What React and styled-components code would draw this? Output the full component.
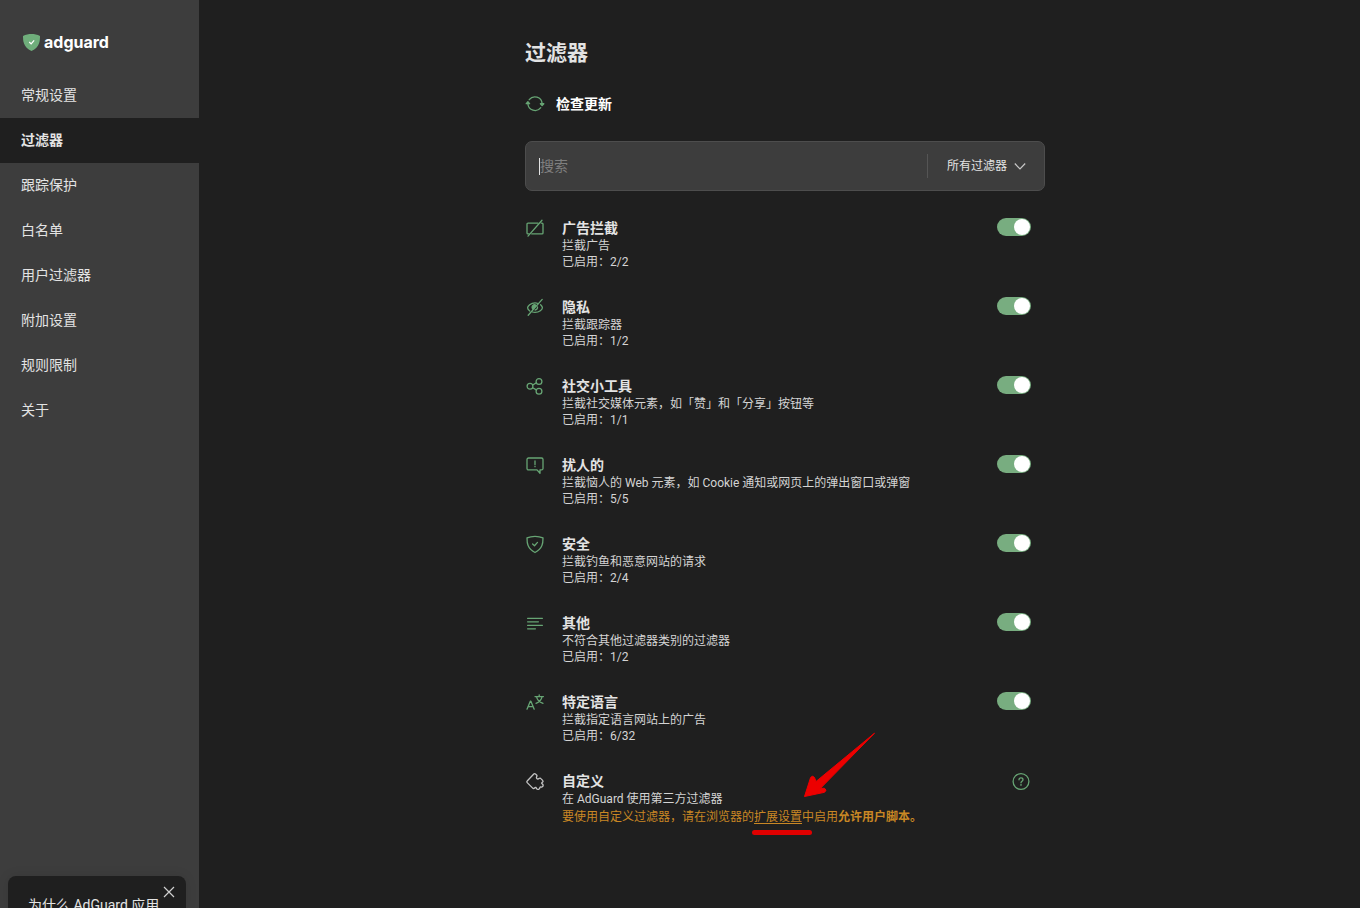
import { useState } from 'react'
import styled, { createGlobalStyle } from 'styled-components'

const NAV_ITEMS = [
    '常规设置',
    '过滤器',
    '跟踪保护',
    '白名单',
    '用户过滤器',
    '附加设置',
    '规则限制',
    '关于',
]

const FILTER_GROUPS = [
    { id: 'ads', title: '广告拦截', description: '拦截广告', enabled: '2/2' },
    { id: 'privacy', title: '隐私', description: '拦截跟踪器', enabled: '1/2' },
    {
        id: 'social',
        title: '社交小工具',
        description: '拦截社交媒体元素，如「赞」和「分享」按钮等',
        enabled: '1/1',
    },
    {
        id: 'annoyances',
        title: '扰人的',
        description: '拦截恼人的 Web 元素，如 Cookie 通知或网页上的弹出窗口或弹窗',
        enabled: '5/5',
    },
    {
        id: 'security',
        title: '安全',
        description: '拦截钓鱼和恶意网站的请求',
        enabled: '2/4',
    },
    {
        id: 'other',
        title: '其他',
        description: '不符合其他过滤器类别的过滤器',
        enabled: '1/2',
    },
    {
        id: 'language',
        title: '特定语言',
        description: '拦截指定语言网站上的广告',
        enabled: '6/32',
    },
]

const ICONS = {
    ads: (
        <>
            <path d='M4.2 15.9H3a1 1 0 0 1-1-1V6.1a1 1 0 0 1 1-1h10' />
            <path d='M16.2 5.1H17a1 1 0 0 1 1 1v8.8a1 1 0 0 1-1 1H6.8' />
            <path d='M17 2.3 3 18.1' />
        </>
    ),
    privacy: (
        <>
            <path d='M4.8 14C3.300 12.900 2.600 11.600 2.600 10.800c0-1.600 3-5 7.400-5 1.200 0 2.200.3 3.200.7' />
            <path d='M15.600 7.700c1.200 1.100 1.800 2.300 1.800 3.100 0 1.600-3 4.600-7.400 4.600-.9 0-1.700-.1-2.500-.4' />
            <path d='M8 12.200a2.400 2.400 0 0 1 3.200-3.800L8 12.200Z' fill='#67a574' />
            <path d='M12.500 10a2.600 2.600 0 0 1-2.400 3' />
            <path d='M17.200 2.400 3.200 18.200' />
        </>
    ),
    social: (
        <>
            <circle cx='5' cy='10.300' r='2.900' />
            <circle cx='14' cy='5.500' r='2.900' />
            <circle cx='14' cy='15.300' r='2.900' />
            <path d='M7.700 9 11.300 6.900M7.700 11.700l3.600 2.200' />
        </>
    ),
    annoyances: (
        <>
            <path d='M12 14.900H3.500A1.500 1.500 0 0 1 2 13.400V4.500A1.500 1.500 0 0 1 3.500 3h13A1.500 1.500 0 0 1 18 4.500v8.900a1.500 1.500 0 0 1-1.500 1.500H15v3.400L12 14.900Z' />
            <path d='M10 6v3.400M10 11.200v.5' />
        </>
    ),
    security: (
        <>
            <path d='M10 2.300c2.800 0 5.600.5 8 1.600 0 5-.2 10.600-8 14.600-7.800-4-8-9.600-8-14.600 2.400-1.100 5.200-1.600 8-1.600Z' />
            <path d='m7.600 10 1.900 1.700 3-3.300' />
        </>
    ),
    other: <path d='M2.600 5.300h14.800M2.600 8.800h10.800M2.600 12.300h14.800M2.600 15.800h7.800' />,
    language: (
        <>
            <path d='m2 17.200 3.300-8h.6l3.300 8M3.100 14.600h5' />
            <path d='M10 4.600h8.400M14.200 3v1.600M17 4.800c-.6 3-2.800 5.300-6 6.500M11.600 4.800c.6 3 2.800 5.300 6.400 6.500' />
        </>
    ),
    custom: (
        <path d='M2.200 10 8.800 3a1.200 1.200 0 0 1 1.700 0l1.300 1.200c.4.5.3 1-.1 1.500-.7 1.100 0 2.200 1 2.300.5 0 .9-.1 1.300-.5.700-.6 1.400-.5 1.900.1l1.700 1.800c.6.600.6 1.200 0 1.700l-.7.6c-.4.400-.2.900.3 1.100 1.300.6 1.300 2.600-.1 3.100-.4.200-.9.200-1.400.1-.5-.1-.8.2-.9.700 0 .6-.2 1-.7 1.300-1.100.8-2.600.2-2.900-1-.2-.6-.6-.8-1.100-.4l-.7.600a1.200 1.200 0 0 1-1.700-.1L2.200 11.600a1.100 1.100 0 0 1 0-1.600Z' />
    ),
}

function GroupIcon({ name, muted }) {
    return (
        <LineIcon viewBox='0 0 20 20' $muted={muted} aria-hidden='true'>
            {ICONS[name]}
        </LineIcon>
    )
}

function Logo() {
    return (
        <LogoLink href='#'>
            <svg width='17' height='17' viewBox='0 0 18 18' aria-hidden='true'>
                <path
                    fill='#6fae7b'
                    d='M9 0C6.200 0 2.800.7 0 2c0 5 .1 11.800 9 16 8.900-4.200 9-11 9-16C15.200.7 11.800 0 9 0Z'
                />
                <path
                    d='m6.600 8.500 2 2 3.200-3.700'
                    fill='none'
                    stroke='#fff'
                    strokeWidth='1.300'
                />
            </svg>
            adguard
        </LogoLink>
    )
}

function Sidebar() {
    return (
        <Aside>
            <Logo />
            <nav>
                {NAV_ITEMS.map((item) => (
                    <NavLink key={item} href='#' $active={item === '过滤器'}>
                        {item}
                    </NavLink>
                ))}
            </nav>
            <Promo>
                <PromoText>为什么 AdGuard 应用</PromoText>
                <PromoClose type='button' aria-label='关闭'>
                    <svg width='12' height='12' viewBox='0 0 12 12'>
                        <path
                            d='m1 1 10 10M11 1 1 11'
                            stroke='currentColor'
                            strokeWidth='1.200'
                        />
                    </svg>
                </PromoClose>
            </Promo>
        </Aside>
    )
}

function Search() {
    const [query, setQuery] = useState('')

    return (
        <SearchBox>
            <Caret />
            <SearchInput
                aria-label='搜索'
                placeholder='搜索'
                value={query}
                onChange={(e) => setQuery(e.target.value)}
            />
            <SelectWrapper>
                <Select aria-label='所有过滤器'>
                    <option>所有过滤器</option>
                </Select>
                <svg width='12' height='8' viewBox='0 0 12 8' aria-hidden='true'>
                    <path
                        d='m.8 1.500 5.200 5.500 5.200-5.500'
                        fill='none'
                        stroke='#c8c8c8'
                        strokeWidth='1.200'
                    />
                </svg>
            </SelectWrapper>
        </SearchBox>
    )
}

function FilterGroup({ group }) {
    const [checked, setChecked] = useState(true)

    return (
        <Group>
            <GroupIcon name={group.id} />
            <GroupBody>
                <GroupTitle htmlFor={group.id}>{group.title}</GroupTitle>
                <GroupText>{group.description}</GroupText>
                <GroupText>已启用：{group.enabled}</GroupText>
            </GroupBody>
            <Toggle
                id={group.id}
                type='checkbox'
                checked={checked}
                onChange={() => setChecked(!checked)}
            />
        </Group>
    )
}

function CustomGroup() {
    return (
        <Group>
            <GroupIcon name='custom' muted />
            <GroupBody>
                <GroupTitle as='h2'>自定义</GroupTitle>
                <GroupText>在 AdGuard 使用第三方过滤器</GroupText>
                <Warning>
                    要使用自定义过滤器，请在浏览器的
                    <LinkWrapper>
                        <a href='#'>扩展设置</a>
                        <Pointer />
                    </LinkWrapper>
                    中启用<b>允许用户脚本。</b>
                </Warning>
            </GroupBody>
            <HelpButton type='button' aria-label='帮助'>
                <LineIcon viewBox='0 0 20 20'>
                    <circle cx='10' cy='10.500' r='7.900' />
                    <path d='M8 8.800c0-1.200.9-1.900 2-1.900s2 .7 2 1.800c0 1.400-2 1.600-2 3M10 13.300v1' />
                </LineIcon>
            </HelpButton>
        </Group>
    )
}

function Pointer() {
    return (
        <PointerSvg width='124' height='104' viewBox='0 0 124 104' aria-hidden='true'>
            <path
                fill='#ec0000'
                stroke='#ec0000'
                strokeLinejoin='round'
                d='M122.500 1.200 64 49.500 62.500 45.500Q60.500 43 58.600 45.500L52.500 64.500 72.500 60.300Q75.500 58 72.500 56.300L68.500 56.300Z'
            />
            <path d='M2.500 100.500h55' stroke='#e00000' strokeWidth='5' strokeLinecap='round' />
        </PointerSvg>
    )
}

function App() {
    return (
        <Page lang='zh-CN'>
            <GlobalStyles />
            <Sidebar />
            <Main>
                <Content>
                    <Title>过滤器</Title>
                    <UpdateButton type='button'>
                        <LineIcon viewBox='0 0 20 20' aria-hidden='true'>
                            <path d='M4.200 5.700A7.200 7.200 0 0 1 17.100 9.600M15.800 13.700A7.200 7.200 0 0 1 2.900 9.800' />
                            <path
                                d='M15.400 9.700h3.400l-1.700 1.900ZM1.200 9.700h3.400L2.900 7.800Z'
                                fill='#67a574'
                            />
                        </LineIcon>
                        检查更新
                    </UpdateButton>
                    <Search />
                    <Groups>
                        {FILTER_GROUPS.map((group) => (
                            <FilterGroup key={group.id} group={group} />
                        ))}
                        <CustomGroup />
                    </Groups>
                </Content>
            </Main>
        </Page>
    )
}

const GlobalStyles = createGlobalStyle`
    *, *::before, *::after {
        box-sizing: border-box;
        margin: 0;
    }

    body {
        background-color: #1f1f1f;
        color: #e3e3e3;
        font-family: Roboto, 'Noto Sans CJK SC', sans-serif;
        font-size: 14px;
    }

    button, input, select {
        font: inherit;
        color: inherit;
        background: none;
        border: none;
        padding: 0;
    }

    button {
        cursor: pointer;
    }
`

const Page = styled.div`
    display: flex;
    align-items: flex-start;
    min-height: 100vh;
`

const Aside = styled.aside`
    position: sticky;
    top: 0;
    flex: 0 0 199px;
    display: flex;
    flex-direction: column;
    height: 100vh;
    background-color: #3d3d3d;
`

const LogoLink = styled.a`
    display: flex;
    align-items: center;
    gap: 4px;
    padding: 31px 23px 20px;

    font-family: Inter, sans-serif;
    font-size: 16px;
    font-weight: 700;
    line-height: 22px;
    color: #fff;
    text-decoration: none;
`

const NavLink = styled.a`
    display: block;
    padding-inline: 21px;
    line-height: 45px;

    background-color: ${({ $active }) => ($active ? '#1f1f1f' : 'transparent')};
    font-weight: ${({ $active }) => ($active ? 700 : 400)};
    color: inherit;
    text-decoration: none;
`

const Promo = styled.div`
    flex: 0 0 32px;
    display: flex;
    align-items: flex-start;
    justify-content: space-between;
    margin: auto 13px 0 8px;
    padding: 10px 11px 0 20px;
    overflow: hidden;

    background-color: #1f1f1f;
    border-radius: 8px 8px 0 0;
    box-shadow: 0 0 12px rgba(0, 0, 0, 0.1);
`

const PromoText = styled.p`
    padding-block-start: 8px;
    line-height: 22px;
    white-space: nowrap;
`

const PromoClose = styled.button`
    display: flex;
    color: #d0d0d0;
`

const Main = styled.main`
    flex: 1;
    display: flex;
    justify-content: center;
    padding: 39px 0 64px 11px;
`

const Content = styled.div`
    display: flex;
    flex-direction: column;
    align-items: flex-start;
    gap: 25px;
    width: 100%;
    max-width: 520px;
`

const Title = styled.h1`
    font-size: 21px;
    font-weight: 700;
    line-height: 28px;
`

const LineIcon = styled.svg`
    flex: none;
    width: 20px;
    height: 20px;

    fill: none;
    stroke: ${({ $muted }) => ($muted ? '#c4c4c4' : '#67a574')};
    stroke-width: 1.3;
    stroke-linecap: round;
    stroke-linejoin: round;
`

const UpdateButton = styled.button`
    display: flex;
    align-items: center;
    gap: 11px;

    color: #fff;
    font-weight: 700;
    line-height: 24px;
`

const SearchBox = styled.div`
    display: flex;
    align-items: center;
    width: 100%;
    height: 50px;
    padding-inline: 13px 18px;

    background-color: #3d3d3d;
    border: 1px solid #4d4d4d;
    border-radius: 7px;
`

const Caret = styled.span`
    width: 1px;
    height: 17px;
    background-color: #e3e3e3;
`

const SearchInput = styled.input`
    flex: 1;
    min-width: 0;
    line-height: 20px;
    outline: none;

    &::placeholder {
        color: #7f7f7f;
        opacity: 1;
    }
`

const SelectWrapper = styled.div`
    display: flex;
    align-items: center;
    gap: 6px;
    padding-inline-start: 19px;

    border-inline-start: 1px solid #555;
    font-size: 12px;
`

const Select = styled.select`
    appearance: none;
    line-height: 24px;
`

const Groups = styled.div`
    display: flex;
    flex-direction: column;
    gap: 27px;
    width: 100%;
    margin-block-start: 2px;
    padding-inline-end: 14px;
`

const Group = styled.section`
    display: flex;
    align-items: flex-start;
    gap: 17px;
`

const GroupBody = styled.div`
    flex: 1;
`

const GroupTitle = styled.label`
    display: block;
    font-size: 14px;
    font-weight: 700;
    line-height: 20px;
`

const GroupText = styled.p`
    font-size: 12px;
    line-height: 16px;
    color: #d4d4d4;
`

const Warning = styled(GroupText)`
    margin-block-start: 2px;
    color: #c98724;

    a {
        color: inherit;
        text-underline-offset: 2px;
    }
`

const LinkWrapper = styled.span`
    position: relative;
`

const PointerSvg = styled.svg`
    position: absolute;
    left: -2px;
    top: -78px;
    pointer-events: none;
`

const Toggle = styled.input`
    appearance: none;
    flex: none;
    display: flex;
    width: 34px;
    height: 18px;
    padding: 1px;

    background-color: ${({ checked }) => (checked ? '#78ad80' : '#6e6e6e')};
    border-radius: 9px;
    cursor: pointer;

    &::before {
        content: '';
        width: 16px;
        height: 16px;
        margin-inline-start: ${({ checked }) => (checked ? 'auto' : '0')};
        background-color: #fff;
        border-radius: 50%;
    }
`

const HelpButton = styled.button`
    display: flex;
`

export default App
